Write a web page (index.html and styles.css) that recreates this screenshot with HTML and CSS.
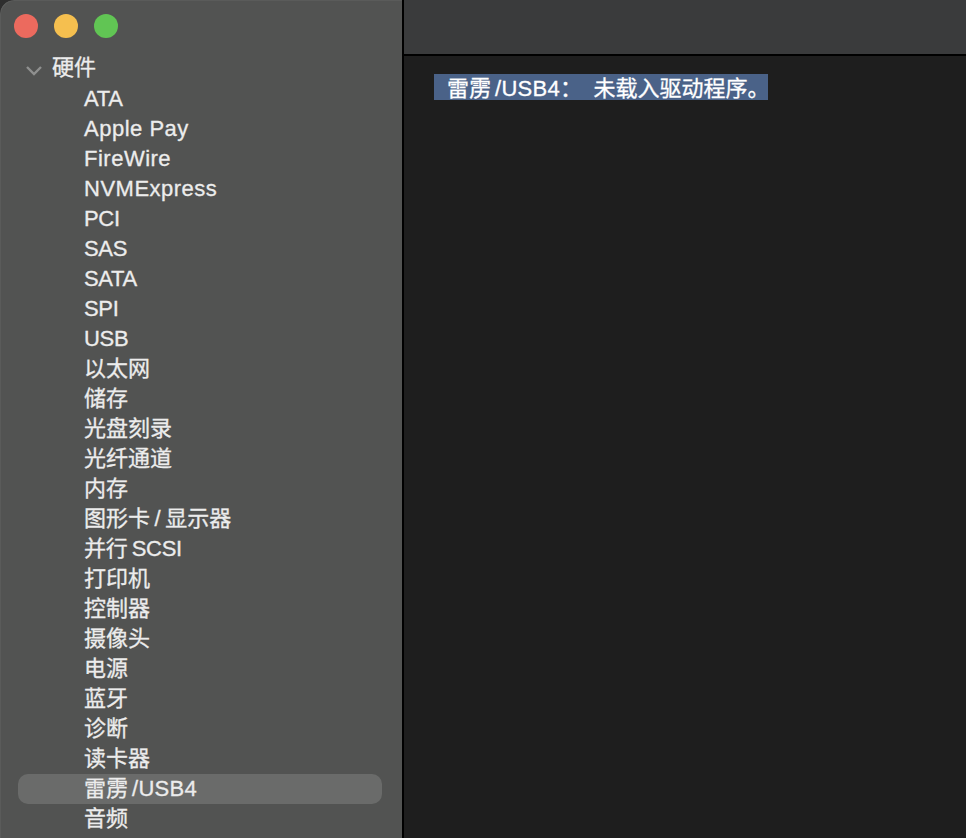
FILE: index.html
```html
<!DOCTYPE html>
<html lang="zh-CN">
<head>
<meta charset="utf-8">
<title>系统信息</title>
<link rel="stylesheet" href="styles.css">
</head>
<body>
<div class="window">
  <aside class="sidebar">
    <div class="lights">
      <span class="light red"></span>
      <span class="light yellow"></span>
      <span class="light green"></span>
    </div>
    <div class="section">
      <svg class="chevron" width="18" height="12" viewBox="0 0 18 12"><path d="M2 2 L9 9 L16 2" fill="none" stroke="#8f908f" stroke-width="2.4"/></svg>
      <span>硬件</span>
    </div>
    <ul class="list">
      <li class="caps">ATA</li>
      <li class="lower">Apple Pay</li>
      <li class="lower">FireWire</li>
      <li class="lower">NVMExpress</li>
      <li class="caps">PCI</li>
      <li class="caps">SAS</li>
      <li class="caps">SATA</li>
      <li class="caps">SPI</li>
      <li class="caps">USB</li>
      <li>以太网</li>
      <li>储存</li>
      <li>光盘刻录</li>
      <li>光纤通道</li>
      <li>内存</li>
      <li class="loose">图形卡 /&nbsp;显示器</li>
      <li class="caps loose">并行 SCSI</li>
      <li>打印机</li>
      <li>控制器</li>
      <li>摄像头</li>
      <li>电源</li>
      <li>蓝牙</li>
      <li>诊断</li>
      <li>读卡器</li>
      <li class="selected">雷雳 /USB4</li>
      <li>音频</li>
    </ul>
  </aside>
  <main class="main">
    <header class="toolbar"></header>
    <section class="content">
      <p class="message"><span class="msg-label">雷雳 /USB4：</span><span class="msg-value">未载入驱动程序。</span></p>
    </section>
  </main>
</div>
</body>
</html>
```
FILE: styles.css
```css
* { box-sizing: border-box; }
html, body { margin: 0; height: 100%; background: #2e2e2e; overflow: hidden; }
body { font-family: "Liberation Sans", "Noto Sans CJK SC", sans-serif; font-size: 22px; color: #ececec; -webkit-text-stroke: 0.3px currentColor; }
.window { display: flex; width: 966px; height: 838px; border-top-left-radius: 14px; overflow: hidden; }
.sidebar { width: 402px; flex: none; background: #525352; overflow: hidden; box-shadow: inset 1px 1px 0 rgba(255,255,255,0.05); border-top-left-radius: 14px; }
.lights { display: flex; gap: 16px; padding: 14px 0 0 14px; height: 51px; }
.light { width: 24px; height: 24px; border-radius: 50%; }
.red { background: #ec6a5e; }
.yellow { background: #f5bf4f; }
.green { background: #61c554; }
.section { display: flex; align-items: flex-start; height: 33px; line-height: 30px; padding: 2px 0 0 25px; gap: 9px; }
.chevron { margin-top: 12px; }
.list { list-style: none; margin: 0; padding: 0 20px 0 18px; }
.list li { height: 30px; line-height: 30px; padding-left: 66px; word-spacing: -3px; }
.list li.caps { letter-spacing: -0.3px; }
.list li.lower { letter-spacing: 0.5px; word-spacing: 0; }
.list li.loose { word-spacing: -1.5px; }
.list li.selected { background: #6a6b6a; border-radius: 10px; letter-spacing: 0.3px; }
.main { flex: 1; display: flex; flex-direction: column; border-left: 2px solid #000; }
.toolbar { height: 56px; flex: none; background: #3a3b3c; border-bottom: 2px solid #000; }
.content { flex: 1; background: #1e1e1e; padding: 18px 0 0 30px; }
.message { width: 334px; margin: 0; height: 26px; line-height: 30px; padding: 0 0 0 13px; background: #4a6288; color: #fff; white-space: nowrap; }
.msg-label { word-spacing: -3px; letter-spacing: 0.3px; }
.msg-value { margin-left: 11px; }
```
